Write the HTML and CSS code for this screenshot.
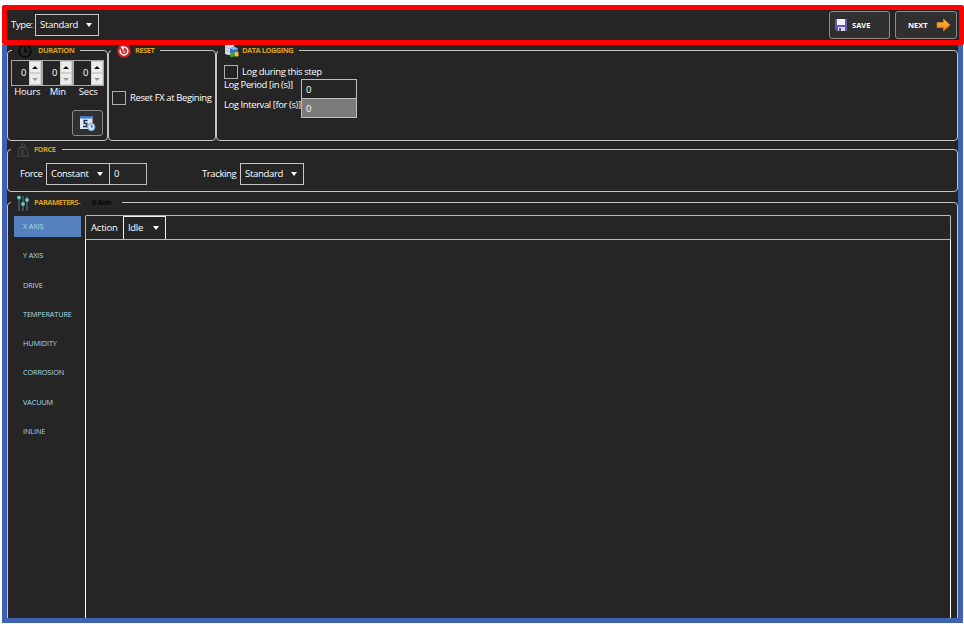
FILE: index.html
```
<!DOCTYPE html>
<html lang="en">
<head>
    <meta charset="UTF-8">
    <meta name="viewport" content="width=device-width, initial-scale=1.0">
    <title>Step Editor</title>
    <link rel="stylesheet" href="styles.css">
</head>
<body>
<div class="toolbar">
    <span class="type-label">Type:</span>
    <div class="select select-type"><span>Standard</span></div>
    <button class="tool-button save">
        <svg width="14" height="14" viewBox="0 0 14 14">
            <path d="M1 1h12v12H3l-2-2z" fill="#6659ad"/>
            <path d="M3 1h8v6H3z" fill="#f2f2f8"/>
            <path d="M4 9h7v4H4z" fill="#d5d4e6"/>
            <path d="M5 10h2v3H5z" fill="#554894"/>
        </svg>
        <span>SAVE</span>
    </button>
    <button class="tool-button next">
        <span>NEXT</span>
        <svg width="15" height="14" viewBox="0 0 15 14">
            <defs>
                <linearGradient id="arrow" x1="0" y1="0" x2="0" y2="1">
                    <stop offset="0" stop-color="#ffc04d"/>
                    <stop offset="1" stop-color="#f27a00"/>
                </linearGradient>
            </defs>
            <path d="M1 4.500h6.500V1L14 7l-6.500 6V9.500H1z" fill="url(#arrow)" stroke="#e58a1c" stroke-width=".6"/>
        </svg>
    </button>
</div>

<div class="frame">
    <div class="groups">
        <fieldset class="group duration">
            <legend>
                <svg width="14" height="14" viewBox="0 0 14 14" fill="none" stroke="#060606">
                    <circle cx="7" cy="7" r="6" stroke-width="1.500"/>
                    <path d="M7 3v4.500h3.500" stroke-width="1.300"/>
                </svg>
                <span>DURATION</span>
            </legend>
            <div class="spinners">
                <div class="spinner"><span>0</span><i class="up"></i><i class="down"></i></div>
                <div class="spinner"><span>0</span><i class="up"></i><i class="down"></i></div>
                <div class="spinner"><span>0</span><i class="up"></i><i class="down"></i></div>
            </div>
            <div class="units"><span>Hours</span><span>Min</span><span>Secs</span></div>
            <button class="schedule">
                <svg width="17" height="17" viewBox="0 0 17 17">
                    <rect x="1" y="1" width="12.500" height="13" fill="#dfe7f4"/>
                    <path d="M1 1h12.500v2.500H1z" fill="#3f78cf"/>
                    <path d="M8.500 5.500H5.200v3h2.600v3H4" fill="none" stroke="#25304a" stroke-width="1.400"/>
                    <circle cx="12.300" cy="12" r="3.700" fill="#d7e7fb" stroke="#6d98d6"/>
                    <path d="M12.300 9.700V12h1.700" fill="none" stroke="#2d5aa0"/>
                </svg>
            </button>
        </fieldset>
        <fieldset class="group reset">
            <legend>
                <svg width="14" height="14" viewBox="0 0 14 14">
                    <circle cx="7" cy="7" r="6.800" fill="#cf2424"/>
                    <path d="M3.400 5.500A3.900 3.900 0 1 0 8 3.300" fill="none" stroke="#fff" stroke-width="1.400"/>
                    <path d="M3.500 2.500l4.800-.3-2.300 4z" fill="#fff"/>
                    <circle cx="7" cy="7.500" r="1.500" fill="#e98c8c"/>
                </svg>
                <span>RESET</span>
            </legend>
            <label class="check"><i class="box"></i><span>Reset FX at Begining</span></label>
        </fieldset>
        <fieldset class="group logging">
            <legend>
                <svg width="15" height="15" viewBox="0 0 15 15">
                    <path d="M1 2.500Q5 0 10 1.500V11q-5 2-9 0z" fill="#d9dbea"/>
                    <path d="M1 4.500q4 2 9 0M1 7.500q4 2 9 0" fill="none" stroke="#a9add0" stroke-width=".7"/>
                    <path d="M6 5.500l4-2L14 5.500v4l-4 1.500L6 9.500z" fill="#2e70d0"/>
                    <path d="M6 5.500l4 1.500 4-1.500-4-2z" fill="#8db9f2"/>
                    <rect x="6" y="9.500" width="4" height="4.500" rx="1" fill="#35ab31"/>
                    <rect x="10.500" y="9" width="4" height="4.500" rx="1" fill="#efc72f"/>
                </svg>
                <span>DATA LOGGING</span>
            </legend>
            <label class="check"><i class="box"></i><span>Log during this step</span></label>
            <div class="log-row"><span>Log Period [in (s)]</span><div class="field">0</div></div>
            <div class="log-row"><span>Log Interval [for (s)]</span><div class="field disabled">0</div></div>
        </fieldset>
    </div>

    <fieldset class="group force">
        <legend>
            <svg width="12" height="14" viewBox="0 0 12 14" fill="none" stroke="#4b4b52">
                <circle cx="6" cy="2.500" r="1.700"/>
                <path d="M2.500 4.500h7l1.700 8.800H.8zM7.600 6.800H4.700v4.500h2.900M4.700 9h2.500"/>
            </svg>
            <span>FORCE</span>
        </legend>
        <div class="force-row">
            <span>Force</span>
            <div class="select select-force"><span>Constant</span></div>
            <div class="field force-value">0</div>
            <span class="tracking">Tracking</span>
            <div class="select select-tracking"><span>Standard</span></div>
        </div>
    </fieldset>

    <fieldset class="group parameters">
        <legend>
            <svg width="12" height="16" viewBox="0 0 12 16">
                <path d="M2 1v15M6 1v15M10 1v15" stroke="#3d5665" stroke-width="1.800"/>
                <circle cx="2" cy="2.500" r="2" fill="#55c3a7"/>
                <circle cx="6" cy="9" r="2" fill="#55c3a7"/>
                <circle cx="10" cy="5" r="2" fill="#55c3a7"/>
                <path d="M1.500 2.500h1M5.500 9h1M9.500 5h1" stroke="#d5f2ea"/>
            </svg>
            <span>PARAMETERS-</span>
            <span class="current">X Axis</span>
        </legend>
        <div class="params">
            <div class="tabs">
                <div class="tab active">X AXIS</div>
                <div class="tab">Y AXIS</div>
                <div class="tab">DRIVE</div>
                <div class="tab">TEMPERATURE</div>
                <div class="tab">HUMIDITY</div>
                <div class="tab">CORROSION</div>
                <div class="tab">VACUUM</div>
                <div class="tab">INLINE</div>
            </div>
            <div class="panel">
                <div class="panel-header">
                    <span>Action</span>
                    <div class="select select-action"><span>Idle</span></div>
                </div>
                <div class="panel-body"></div>
            </div>
        </div>
    </fieldset>
</div>
</body>
</html>
```
FILE: styles.css
```
* {
    box-sizing: border-box;
}
body {
    margin: 0;
    padding: 5px 0 0 2px;
    height: 624px;
    overflow: hidden;
    background-color: #ffffff;
    color: #ffffff;
    font-family: "Open Sans", "Noto Sans", sans-serif;
    font-size: 9.5px;
    letter-spacing: -0.38px;
    line-height: 12px;
    white-space: nowrap;
}
button {
    font-family: inherit;
    color: inherit;
    padding: 0;
}
.toolbar {
    position: relative;
    z-index: 1;
    display: flex;
    align-items: center;
    width: 962px;
    height: 40px;
    padding: 0 2px 0 4px;
    border: 5px solid #ff0000;
    border-radius: 2px;
    background-color: #252525;
}
.type-label {
    width: 24px;
}
.select {
    display: flex;
    align-items: center;
    justify-content: space-between;
    height: 22px;
    padding: 0 6px 0 4px;
    border: 1px solid #c8c8c8;
    letter-spacing: -0.3px;
}
.select::after {
    content: "";
    border: 3px solid transparent;
    border-top: 4px solid #ffffff;
    border-bottom: 0;
}
.select-type {
    width: 64px;
}
.tool-button {
    display: flex;
    align-items: center;
    height: 28px;
    border: 1px solid #8a8a8a;
    border-radius: 3px;
    background-color: #303030;
    font-size: 7.5px;
    font-weight: bold;
}
.save {
    width: 61px;
    margin-left: auto;
    padding-left: 4px;
    gap: 4px;
}
.next {
    width: 62px;
    margin-left: 5px;
    padding-left: 12px;
    gap: 8px;
}
.frame {
    width: 961px;
    height: 578px;
    border: 5px solid #3e61b3;
    border-top: 0;
    background-color: #252525;
    overflow: hidden;
}
.groups {
    display: flex;
    margin-top: -2px;
}
.group {
    min-width: 0;
    margin: 0;
    padding: 0;
    border: 1px solid #c4c4c4;
    border-radius: 4px;
}
legend {
    display: flex;
    align-items: center;
    height: 15px;
    margin-left: 3px;
    padding: 0 6px;
    color: #dba022;
    font-size: 7.5px;
    font-weight: bold;
    letter-spacing: -0.5px;
}
legend span {
    margin-left: 5px;
    padding-bottom: 1px;
}
.duration {
    width: 101px;
    height: 98px;
}
.duration legend {
    margin-left: 4px;
}
.duration legend span {
    margin-left: 6px;
}
.reset {
    width: 108px;
}
.reset legend {
    margin-left: 2px;
}
.reset legend span {
    margin-left: 4px;
}
.logging {
    flex: 1;
}
.logging legend {
    margin-left: 1px;
}
.logging legend span {
    margin-left: 3px;
}
.spinners {
    display: flex;
    margin: 2px 0 0 3px;
}
.spinner {
    display: grid;
    grid-template-columns: 17px 12px;
    grid-template-rows: 12px 12px;
    width: 31px;
    height: 26px;
    border: 1px solid #a8a8a8;
}
.spinner span {
    grid-row: span 2;
    align-self: center;
    text-align: right;
    padding-right: 3px;
}
.spinner i {
    display: flex;
    align-items: center;
    justify-content: center;
    background-color: #ececec;
    border: 1px solid #d0d0d0;
}
.up::after {
    content: "";
    border: 3px solid transparent;
    border-bottom-color: #111111;
    border-top: 0;
}
.down::after {
    content: "";
    border: 3px solid transparent;
    border-top-color: #999999;
    border-bottom: 0;
}
.units {
    display: flex;
    margin-left: 4px;
    letter-spacing: -0.2px;
}
.units span {
    width: 30.5px;
    text-align: center;
}
.schedule {
    display: flex;
    align-items: center;
    justify-content: center;
    width: 31px;
    height: 26px;
    margin: 12px 0 0 64px;
    border: 1px solid #8a8a8a;
    border-radius: 3px;
    background-color: #303030;
}
.check {
    display: flex;
    align-items: center;
    gap: 4px;
}
.box {
    width: 14px;
    height: 14px;
    border: 1px solid #b0b0b0;
}
.reset .check {
    margin: 33px 0 0 3px;
}
.logging .check {
    margin: 7px 0 0 7px;
}
.log-row {
    display: flex;
    height: 19px;
    padding-left: 7px;
}
.log-row span {
    width: 77px;
    letter-spacing: -0.42px;
}
.log-row:last-child span {
    padding-top: 1px;
}
.field {
    width: 56px;
    height: 20px;
    padding: 4px;
    border: 1px solid #bdbdbd;
}
.field.disabled {
    background-color: #7b7b7b;
}
.force {
    margin-top: 1px;
    height: 50px;
}
.force-row {
    display: flex;
    align-items: center;
    padding: 6px 0 0 12px;
}
.force-row > span {
    width: 26px;
}
.select-force {
    width: 64px;
}
.force-value {
    width: 37px;
    height: 22px;
    padding: 4px;
    border-left: 0;
}
.force-row .tracking {
    width: 38px;
    margin-left: 55px;
}
.select-tracking {
    width: 64px;
}
.parameters {
    margin-top: 2px;
    height: 440px;
}
.parameters legend {
    height: 17px;
}
.parameters .current {
    margin: 0 5px 0 12px;
    color: #080808;
}
.params {
    display: flex;
    padding: 4px 6px 0 6px;
    height: 420px;
}
.tabs {
    width: 67px;
    margin: 1px 4px 0 0;
}
.tab {
    height: 21px;
    margin-bottom: 8.3px;
    padding-left: 9px;
    line-height: 20px;
    font-size: 7.3px;
    letter-spacing: -0.12px;
    color: #a9dbe9;
}
.tab.active {
    background-color: #5581bf;
}
.panel {
    flex: 1;
    display: flex;
    flex-direction: column;
}
.panel-header {
    display: flex;
    align-items: center;
    height: 24px;
    border: 1px solid #b9b9b9;
    border-bottom: 0;
    border-radius: 2px 2px 0 0;
}
.panel-header > span {
    width: 37px;
    padding-left: 5px;
    letter-spacing: -0.2px;
}
.select-action {
    width: 43px;
    height: 24px;
    border-color: #f0f0f0;
}
.panel-body {
    flex: 1;
    border: 1px solid #ffffff;
    border-top-color: #b9b9b9;
}
```
